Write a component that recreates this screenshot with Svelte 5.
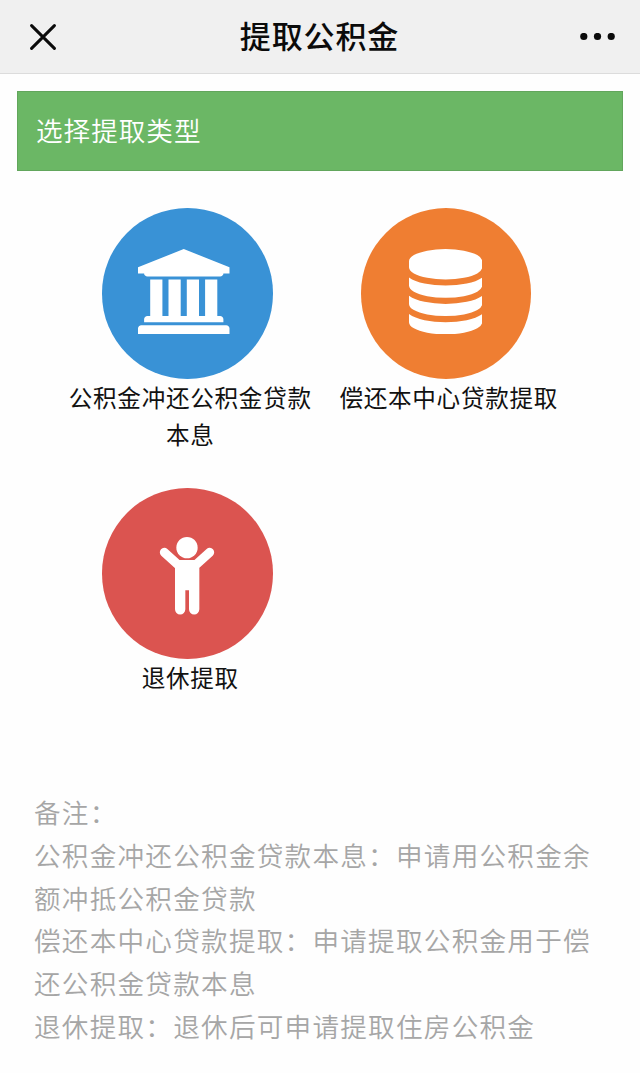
<script>
  const types = [
    { icon: 'bank', color: '#3992d6', label: '公积金冲还公积金贷款本息' },
    { icon: 'coins', color: '#ef7e32', label: '偿还本中心贷款提取' },
    { icon: 'person', color: '#db5450', label: '退休提取' }
  ];

  const notes = [
    '备注：',
    '公积金冲还公积金贷款本息：申请用公积金余额冲抵公积金贷款',
    '偿还本中心贷款提取：申请提取公积金用于偿还公积金贷款本息',
    '退休提取：退休后可申请提取住房公积金'
  ];
</script>

<div class="page">
  <header class="navbar">
    <button type="button" class="nav-button" aria-label="关闭">
      <svg width="26" height="26" viewBox="0 0 26 26" fill="none" stroke="#0b0b0b" stroke-width="3" stroke-linecap="round">
        <path d="M1.6 1.6L24.4 24.4M24.4 1.6L1.6 24.4" />
      </svg>
    </button>
    <h1>提取公积金</h1>
    <button type="button" class="nav-button" aria-label="更多">
      <svg width="36" height="8" viewBox="0 0 36 8" fill="#0b0b0b">
        <circle cx="3.8" cy="3.5" r="3.6" />
        <circle cx="17.5" cy="3.5" r="3.6" />
        <circle cx="31.2" cy="3.5" r="3.6" />
      </svg>
    </button>
  </header>

  <div class="banner">选择提取类型</div>

  <div class="types">
    {#each types as type}
      <div class="type">
        <div class="circle" style="background: {type.color}">
          {#if type.icon === 'bank'}
            <svg class="bank" width="91.5" height="85.4" viewBox="0 0 1920 1792" fill="#fff">
              <path d="M960 0l960 384v128h-128q0 26-20.5 45t-48.5 19h-1526q-28 0-48.5-19t-20.5-45h-128v-128zM256 640h256v768h128v-768h256v768h128v-768h256v768h128v-768h256v768h59q28 0 48.5 19t20.5 45v64h-1664v-64q0-26 20.5-45t48.5-19h59v-768zM1851 1600q28 0 48.5 19t20.5 45v128h-1920v-128q0-26 20.5-45t48.5-19h1782z" />
            </svg>
          {:else if type.icon === 'coins'}
            <svg class="coins" width="73.2" height="85.4" viewBox="0 0 1536 1792" fill="#fff">
              <path d="M768 0q208 0 385 34.5t280 93.5 103 128v128q0 69-103 128t-280 93.5-385 34.5-385-34.5-280-93.5-103-128v-128q0-69 103-128t280-93.5 385-34.5z" />
              {#each [768, 1152, 1536] as y}
                <path d="M768 {y}q237 0 443-43t325-127v170q0 69-103 128t-280 93.5-385 34.5-385-34.5-280-93.5-103-128v-170q119 84 325 127t443 43z" />
              {/each}
            </svg>
          {:else}
            <svg class="person" width="56" height="80" viewBox="0 0 168 240" fill="#fff">
              <circle cx="84" cy="35" r="32" />
              <path d="M16 49L60 89M152 49L108 89" fill="none" stroke="#fff" stroke-width="27" stroke-linecap="round" />
              <path d="M57 72H111L121 97V220a15.5 15.5 0 0 1-31 0V163H79V220a15.5 15.5 0 0 1-31 0V97z" />
            </svg>
          {/if}
        </div>
        <div class="label">{type.label}</div>
      </div>
    {/each}
  </div>

  <div class="notes">
    {#each notes as note}
      <p>{note}</p>
    {/each}
  </div>
</div>

<style>
  :global(body) {
    margin: 0;
    background: #fefefe;
  }

  .page {
    width: 640px;
    height: 1073px;
    overflow: hidden;
    font-family: "Noto Sans CJK SC", sans-serif;
    color: #111;
  }

  .navbar {
    display: flex;
    align-items: center;
    justify-content: space-between;
    box-sizing: border-box;
    height: 74px;
    padding: 0 24px 0 30px;
    background: #f0f0f0;
    border-bottom: 1px solid #dcdcdc;
  }

  .nav-button {
    display: flex;
    padding: 0;
    border: none;
    background: none;
  }

  h1 {
    margin: 0 0 4px 3px;
    font-size: 31px;
    font-weight: 500;
    line-height: 44px;
    letter-spacing: 0.9px;
    color: #0b0b0b;
  }

  .banner {
    box-sizing: border-box;
    height: 80px;
    margin: 17px 17px 0;
    padding-left: 18px;
    background: #6bb765;
    border: 1px solid #62a65c;
    color: #fff;
    font-size: 26.6px;
    font-weight: 350;
    line-height: 76px;
    letter-spacing: 1px;
  }

  .types {
    display: grid;
    grid-template-columns: 258.5px 258.5px;
    grid-auto-rows: 280px;
    margin: 37px 0 0 61px;
  }

  .circle {
    display: flex;
    align-items: center;
    justify-content: center;
    width: 170.5px;
    height: 170.5px;
    margin-left: 41px;
    border-radius: 50%;
  }

  .bank {
    margin: 0 7px 3px 0;
  }

  .coins {
    margin-bottom: 3px;
  }

  .person {
    margin-top: 5px;
  }

  .label {
    font-size: 23.6px;
    line-height: 37px;
    letter-spacing: 0.7px;
    text-align: center;
  }

  .notes {
    margin: 23px 40px 0 34px;
    color: #a6a6a6;
    font-size: 26.6px;
    font-weight: 350;
    line-height: 42.8px;
    letter-spacing: 1.25px;
  }

  .notes p {
    margin: 0;
  }
</style>
